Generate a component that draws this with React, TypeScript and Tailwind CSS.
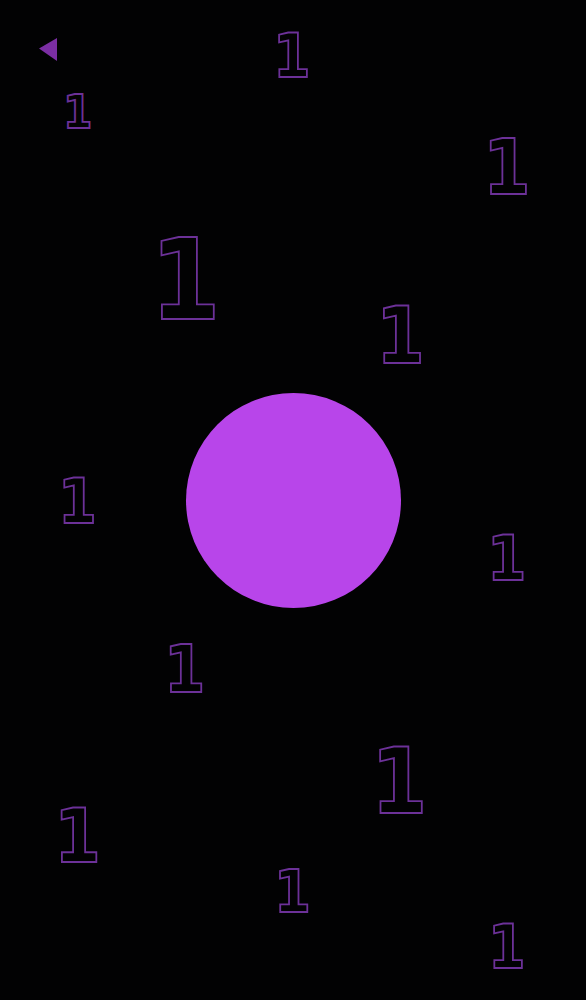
import React from "react";

const ones: { cls: string }[] = [
  { cls: "left-[273px] top-[26px] text-[60px]" },
  { cls: "left-[63px] top-[88px] text-[47px]" },
  { cls: "left-[483px] top-[130px] text-[76px]" },
  { cls: "left-[150px] top-[224px] text-[113px]" },
  { cls: "left-[376px] top-[297px] text-[78px]" },
  { cls: "left-[58px] top-[471px] text-[62px]" },
  { cls: "left-[487px] top-[527px] text-[63px]" },
  { cls: "left-[164px] top-[637px] text-[66px]" },
  { cls: "left-[371px] top-[737px] text-[90px]" },
  { cls: "left-[54px] top-[799px] text-[75px]" },
  { cls: "left-[274px] top-[862px] text-[59px]" },
  { cls: "left-[488px] top-[917px] text-[60px]" },
];

export default function App() {
  return (
    <div className="relative h-[1000px] w-full overflow-hidden bg-[#020203] flex items-center justify-center">
      {ones.map((o, i) => (
        <span
          key={i}
          className={`absolute leading-none font-bold font-['DejaVu_Sans_Condensed','DejaVu_Sans',sans-serif] text-transparent [-webkit-text-stroke:1.8px_#6c3198] select-none ${o.cls}`}
        >
          1
        </span>
      ))}
      <button className="absolute left-[37px] top-[37px] p-0" aria-label="Back">
        <svg width="22" height="25" viewBox="0 0 22 25">
          <polygon points="2,11.5 20,1 20,24" fill="#7b2ea3" />
        </svg>
      </button>
      <div className="w-[215px] h-[215px] rounded-full bg-[#b845ea]" />
    </div>
  );
}
